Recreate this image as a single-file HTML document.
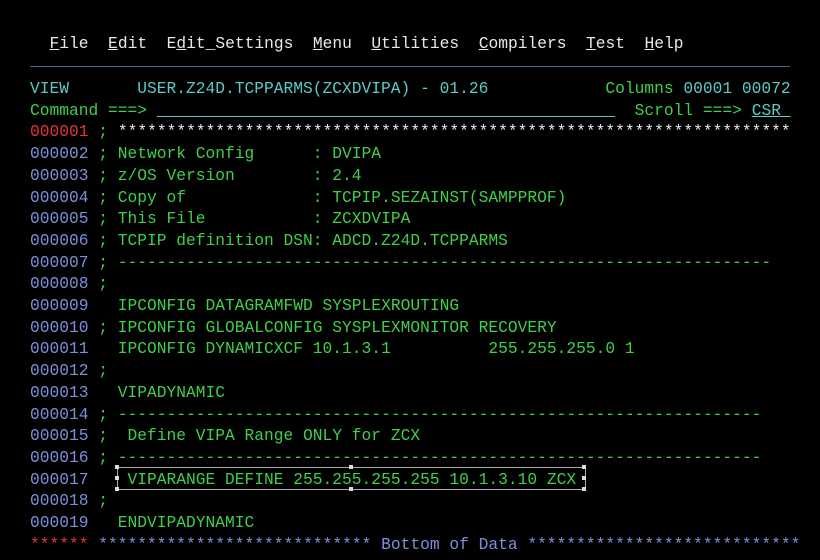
<!DOCTYPE html>
<html><head><meta charset="utf-8"><style>
html,body{margin:0;padding:0;background:#000;width:820px;height:560px;overflow:hidden}
pre{position:absolute;left:30px;margin:0;font-family:"Liberation Mono",monospace;font-size:16.25px;line-height:21.7px;color:#3fcf4a;white-space:pre}
.w{color:#e8e8e8}.t{color:#5cc9c9}.g{color:#3fcf4a}.b{color:#7e8fd9}.r{color:#e53535}.u{text-decoration:underline}
.sep{position:absolute;left:30px;top:66px;width:760px;height:1px;background:#4a5fa0}
.box{position:absolute;left:117px;top:467px;width:467px;height:21px;border:1px solid #aaa}
.h{position:absolute;width:4px;height:4px;background:#ddd}
</style></head><body>
<pre style="top:33px" class="w">  <span class="u">F</span>ile  <span class="u">E</span>dit  E<span class="u">d</span>it_Settings  <span class="u">M</span>enu  <span class="u">U</span>tilities  <span class="u">C</span>ompilers  <span class="u">T</span>est  <span class="u">H</span>elp</pre>
<div class="sep"></div>
<pre style="top:78px"><span class="t">VIEW       USER.Z24D.TCPPARMS(ZCXDVIPA) - 01.26</span>            <span class="g">Columns</span> <span class="t">00001 00072</span>
<span class="g">Command ===&gt;</span> <span class="t u">                                               </span>  <span class="g">Scroll ===&gt;</span> <span class="t u">CSR </span>
<span class="r">000001</span> <span class="g">;</span> <span class="w">*********************************************************************</span>
<span class="b">000002</span> ; Network Config      : DVIPA
<span class="b">000003</span> ; z/OS Version        : 2.4
<span class="b">000004</span> ; Copy of             : TCPIP.SEZAINST(SAMPPROF)
<span class="b">000005</span> ; This File           : ZCXDVIPA
<span class="b">000006</span> ; TCPIP definition DSN: ADCD.Z24D.TCPPARMS
<span class="b">000007</span> ; -------------------------------------------------------------------
<span class="b">000008</span> ;
<span class="b">000009</span>   IPCONFIG DATAGRAMFWD SYSPLEXROUTING
<span class="b">000010</span> ; IPCONFIG GLOBALCONFIG SYSPLEXMONITOR RECOVERY
<span class="b">000011</span>   IPCONFIG DYNAMICXCF 10.1.3.1          255.255.255.0 1
<span class="b">000012</span> ;
<span class="b">000013</span>   VIPADYNAMIC
<span class="b">000014</span> ; ------------------------------------------------------------------
<span class="b">000015</span> ;  Define VIPA Range ONLY for ZCX
<span class="b">000016</span> ; ------------------------------------------------------------------
<span class="b">000017</span>    VIPARANGE DEFINE 255.255.255.255 10.1.3.10 ZCX
<span class="b">000018</span> ;
<span class="b">000019</span>   ENDVIPADYNAMIC
<span class="r">******</span> <span class="b">**************************** Bottom of Data ****************************</span></pre>
<div class="box"></div>
<div class="h" style="left:115px;top:465px"></div><div class="h" style="left:349px;top:465px"></div><div class="h" style="left:582px;top:465px"></div>
<div class="h" style="left:115px;top:476px"></div><div class="h" style="left:582px;top:476px"></div>
<div class="h" style="left:115px;top:487px"></div><div class="h" style="left:349px;top:487px"></div><div class="h" style="left:582px;top:487px"></div>
</body></html>
